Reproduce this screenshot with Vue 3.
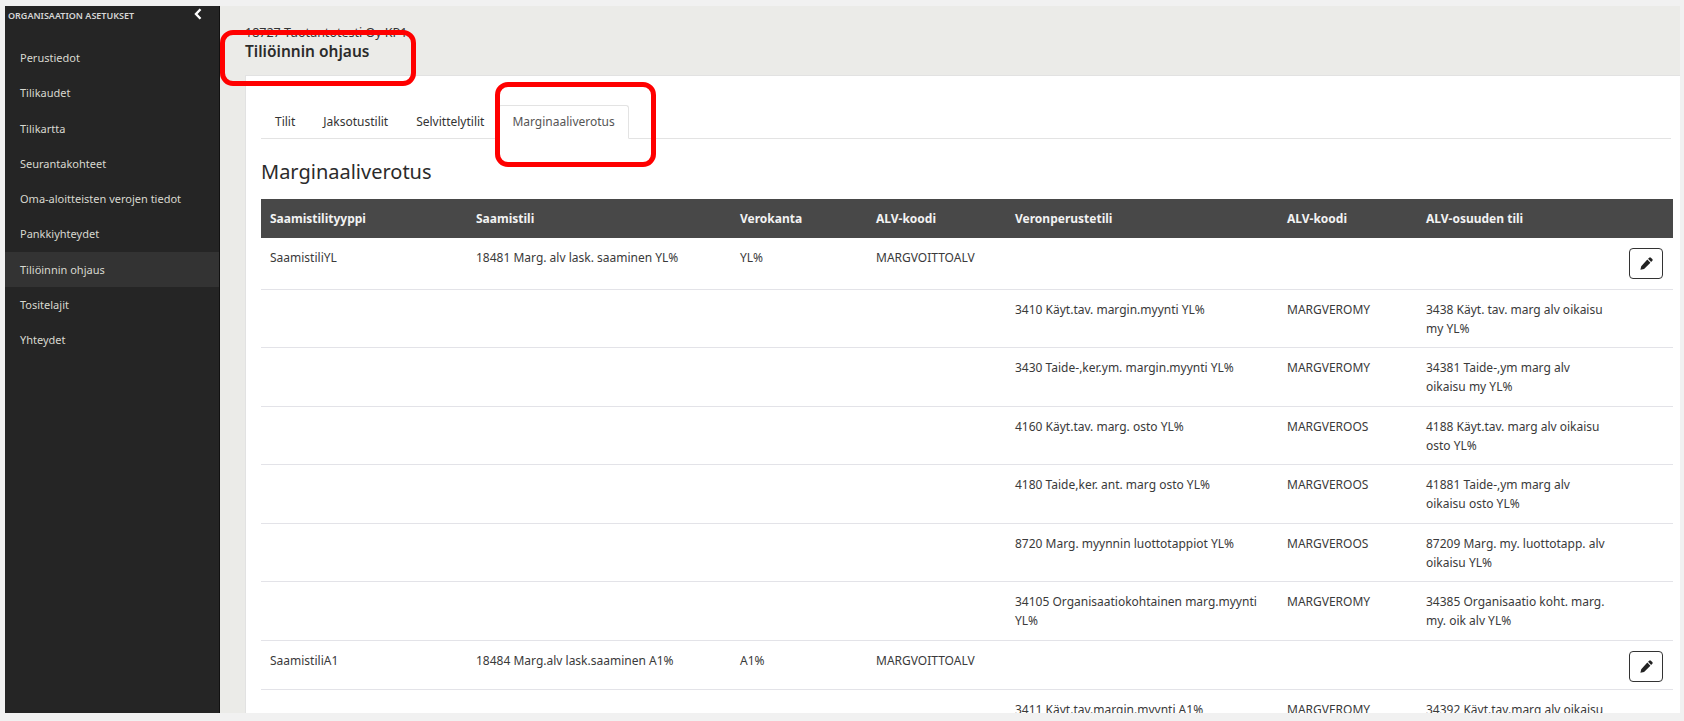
<script setup>
const nav = ['Perustiedot','Tilikaudet','Tilikartta','Seurantakohteet','Oma-aloitteisten verojen tiedot','Pankkiyhteydet','Tiliöinnin ohjaus','Tositelajit','Yhteydet']
const tabs = ['Tilit','Jaksotustilit','Selvittelytilit','Marginaaliverotus']
const heads = ['Saamistilityyppi','Saamistili','Verokanta','ALV-koodi','Veronperustetili','ALV-koodi','ALV-osuuden tili','']
const rows = [
  { h: 51, c: ['SaamistiliYL','18481 Marg. alv lask. saaminen YL%','YL%','MARGVOITTOALV','','',''], edit: true },
  { h: 58, c: ['','','','','3410 Käyt.tav. margin.myynti YL%','MARGVEROMY','3438 Käyt. tav. marg alv oikaisu my YL%'] },
  { h: 59, c: ['','','','','3430 Taide-,ker.ym. margin.myynti YL%','MARGVEROMY','34381 Taide-,ym marg alv oikaisu my YL%'] },
  { h: 58, c: ['','','','','4160 Käyt.tav. marg. osto YL%','MARGVEROOS','4188 Käyt.tav. marg alv oikaisu osto YL%'] },
  { h: 59, c: ['','','','','4180 Taide,ker. ant. marg osto YL%','MARGVEROOS','41881 Taide-,ym marg alv oikaisu osto YL%'] },
  { h: 58, c: ['','','','','8720 Marg. myynnin luottotappiot YL%','MARGVEROOS','87209 Marg. my. luottotapp. alv oikaisu YL%'] },
  { h: 59, c: ['','','','','34105 Organisaatiokohtainen marg.myynti YL%','MARGVEROMY','34385 Organisaatio koht. marg. my. oik alv YL%'] },
  { h: 49, c: ['SaamistiliA1','18484 Marg.alv lask.saaminen A1%','A1%','MARGVOITTOALV','','',''], edit: true },
  { h: 58, c: ['','','','','3411 Käyt.tav.margin.myynti A1%','MARGVEROMY','34392 Käyt.tav.marg alv oikaisu my A1%'] }
]
</script>

<template>
  <div class="shell">
    <aside class="side">
      <div class="side-head">
        <span>ORGANISAATION ASETUKSET</span>
        <svg class="chev" viewBox="0 0 8 12" width="8" height="12"><path d="M6.5 1.2 2 6l4.500 4.800" fill="none" stroke="#fff" stroke-width="2.400"/></svg>
      </div>
      <nav class="nav">
        <a v-for="n in nav" :key="n" class="nav-item" :class="{ active: n === 'Tiliöinnin ohjaus' }">{{ n }}</a>
      </nav>
    </aside>
    <main class="main">
      <div class="crumb">18727 Tuotantotesti Oy KP1</div>
      <h1 class="title">Tiliöinnin ohjaus</h1>
      <section class="card">
        <div class="tabs">
          <a v-for="t in tabs" :key="t" class="tab" :class="{ on: t === 'Marginaaliverotus' }">{{ t }}</a>
        </div>
        <h2 class="sub">Marginaaliverotus</h2>
        <table class="tbl">
          <colgroup>
            <col style="width:206px"><col style="width:264px"><col style="width:136px"><col style="width:139px"><col style="width:272px"><col style="width:139px"><col style="width:204px"><col>
          </colgroup>
          <thead><tr><th v-for="(h,i) in heads" :key="i">{{ h }}</th></tr></thead>
          <tbody>
            <tr v-for="(r,i) in rows" :key="i" :style="{ height: r.h + 'px' }">
              <td v-for="(c,j) in r.c" :key="j">{{ c }}</td>
              <td class="act">
                <button v-if="r.edit" class="edit" aria-label="Muokkaa">
                  <svg viewBox="0 0 16 16" width="13" height="13"><path fill="#222" d="M11.300.9a1.500 1.500 0 0 1 2.100 0l1.700 1.700a1.500 1.500 0 0 1 0 2.100L13.700 6.100 9.900 2.300zM9 3.200 12.800 7 5 14.800l-4.500 1 1-4.500z"/></svg>
                </button>
              </td>
            </tr>
          </tbody>
        </table>
      </section>
      <div class="mark m1"></div>
      <div class="mark m2"></div>
    </main>
  </div>
</template>

<style>
html, body { margin: 0; overflow: hidden; }
</style>

<style scoped>
.shell { box-sizing: border-box; width: 1684px; height: 721px; padding: 6px 4px 8px 5px; background: #f1f1f1; display: flex; font-family: "Noto Sans", "Open Sans", sans-serif; color: #333; overflow: hidden; }
.side { width: 214px; flex: none; background: #252525; color: #ddd; border-right: 1px solid #111; }
.side-head { height: 19px; padding: 0 17px 0 3px; display: flex; justify-content: space-between; align-items: center; font-size: 9px; font-weight: 600; color: #d6d6d6; }
.chev { margin-top: -3px; }
.nav { margin-top: 15px; display: flex; flex-direction: column; }
.nav-item { height: 35.3px; line-height: 35.3px; padding-left: 15px; font-size: 11px; color: #d8d8d0; }
.nav-item.active { background: #333; }
.main { position: relative; flex: 1; min-width: 0; background: #ebebe8; padding: 18px 0 0 25px; display: flex; flex-direction: column; overflow: hidden; }
.crumb { font-size: 12.500px; line-height: 17px; color: #333; height: 17px; }
.title { margin: 0; font-size: 15.500px; line-height: 21px; font-weight: 600; color: #2b2b2b; height: 34px; }
.card { flex: 1; background: #fff; padding: 29px 9px 0 15px; border-left: 1px solid #e2e2e2; border-top: 1px solid #e2e2e2; overflow: hidden; }
.tabs { display: flex; height: 33px; border-bottom: 1px solid #e3e3e3; padding-left: 0; }
.tab { box-sizing: border-box; height: 34px; line-height: 32px; padding: 0 13px; font-size: 12px; color: #333; border: 1px solid transparent; }
.tab.on { background: #fff; color: #555; border-color: #e3e3e3 #e3e3e3 #fff; border-radius: 3px 3px 0 0; }
.sub { margin: 19px 0 13px; font-size: 20px; line-height: 28px; font-weight: 400; color: #2b2b2b; }
.tbl { width: 1412px; border-collapse: collapse; table-layout: fixed; font-size: 12px; color: #3a3a3a; }
th { height: 39px; background: #484848; color: #f2f2f2; text-align: left; padding: 0 9px; font-size: 12px; font-weight: 700; }
td { padding: 10px 9px 0; vertical-align: top; line-height: 19px; border-bottom: 1px solid #e3e3e8; box-sizing: border-box; }
td.act { padding: 10px 10px 0 0; text-align: right; }
.edit { box-sizing: border-box; width: 34px; height: 31px; background: #fff; border: 1px solid #333; border-radius: 4px; padding: 0; display: inline-flex; align-items: center; justify-content: center; }
.mark { position: absolute; box-sizing: border-box; border: 5px solid #f00; border-radius: 13px; }
.m1 { left: 0; top: 24px; width: 196px; height: 56px; }
.m2 { left: 275px; top: 76px; width: 161px; height: 85px; }
</style>
